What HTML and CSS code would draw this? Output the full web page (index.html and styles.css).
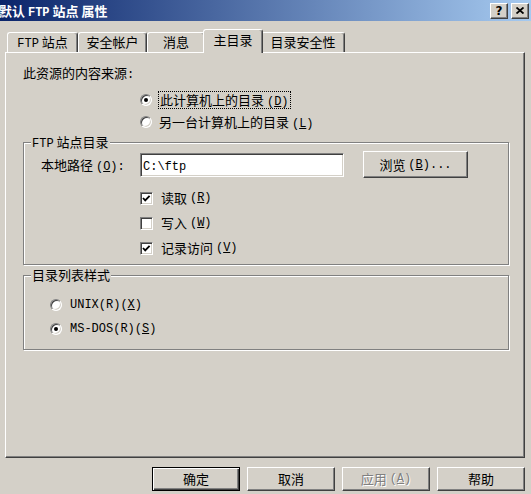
FILE: index.html
```html
<!DOCTYPE html>
<html lang="zh-CN">
<head>
<meta charset="UTF-8">
<link rel="stylesheet" href="styles.css">
<title>默认 FTP 站点 属性</title>
</head>
<body>
<div class="titlebar">
  <div class="title">默认 <span class="en">FTP</span> 站点 属性</div>
  <div class="caption-btn">?</div>
  <div class="caption-btn">
    <svg width="8" height="7" viewBox="0 0 8 7"><path d="M0.5 0.5 L7.5 6.5 M7.5 0.5 L0.5 6.5" stroke="#000" stroke-width="1.8"/></svg>
  </div>
</div>

<div class="tabs">
  <div class="tab" style="width:71px"><span class="en">FTP</span> 站点</div>
  <div class="tab" style="width:69px">安全帐户</div>
  <div class="tab" style="width:58px">消息</div>
  <div class="tab active" style="width:60px">主目录</div>
  <div class="tab" style="width:84px">目录安全性</div>
</div>

<div class="panel">
  <div class="source-label">此资源的内容来源<span class="en">:</span></div>
  <div class="source-options">
    <div class="option"><span class="radio on"></span><span class="focus">此计算机上的目录 <span class="en">(<u>D</u>)</span></span></div>
    <div class="option"><span class="radio"></span><span>另一台计算机上的目录 <span class="en">(<u>L</u>)</span></span></div>
  </div>

  <div class="group">
    <div class="group-title"><span class="en">FTP</span> 站点目录</div>
    <div class="path-row">
      <span class="path-label">本地路径 <span class="en">(<u>O</u>):</span></span>
      <div class="textbox"><span class="en">C:\ftp</span></div>
      <button class="btn browse">浏览 <span class="en">(<u>B</u>)...</span></button>
    </div>
    <div class="checks">
      <div class="option"><span class="check on"><svg width="9" height="9" viewBox="0 0 9 9"><path d="M1 4 L3.2 6.4 L7.6 1.8" fill="none" stroke="#000" stroke-width="1.8"/></svg></span>读取 <span class="en">(<u>R</u>)</span></div>
      <div class="option"><span class="check"></span>写入 <span class="en">(<u>W</u>)</span></div>
      <div class="option"><span class="check on"><svg width="9" height="9" viewBox="0 0 9 9"><path d="M1 4 L3.2 6.4 L7.6 1.8" fill="none" stroke="#000" stroke-width="1.8"/></svg></span>记录访问 <span class="en">(<u>V</u>)</span></div>
    </div>
  </div>

  <div class="group list-style">
    <div class="group-title">目录列表样式</div>
    <div class="list-options">
      <div class="option"><span class="radio"></span><span class="en">UNIX(R)(<u>X</u>)</span></div>
      <div class="option"><span class="radio on"></span><span class="en">MS-DOS(R)(<u>S</u>)</span></div>
    </div>
  </div>
</div>

<div class="buttons">
  <button class="btn default">确定</button>
  <button class="btn">取消</button>
  <button class="btn disabled">应用 <span class="en">(<u>A</u>)</span></button>
  <button class="btn">帮助</button>
</div>
</body>
</html>
```
FILE: styles.css
```css
body {
  margin: 0;
  width: 531px;
  height: 494px;
  overflow: hidden;
  background: #d4d0c8;
  color: #000;
  font: 13px/16px "Noto Sans CJK SC", sans-serif;
}

/* latin runs use a narrow mono face, like the dialog's bitmap font */
.en {
  font-family: "Liberation Mono", monospace;
  font-size: 12px;
  line-height: 1;
}

/* title bar */
.titlebar {
  height: 21px;
  display: flex;
  align-items: center;
  padding-right: 2px;
  background: linear-gradient(to right, #0a246a, #a6caf0);
}

.title {
  flex: 1;
  margin-left: -1px;
  color: #fff;
  font-weight: bold;
}

.caption-btn {
  width: 18px;
  height: 16px;
  box-sizing: border-box;
  margin-left: 3px;
  display: flex;
  align-items: center;
  justify-content: center;
  background: #d4d0c8;
  border: 1px solid;
  border-color: #fff #404040 #404040 #fff;
  box-shadow: inset -1px -1px #808080;
  font: bold 12px/12px "DejaVu Sans", sans-serif;
}

/* tabs */
.tabs {
  display: flex;
  align-items: flex-end;
  height: 23px;
  margin-top: 8px;
  padding-left: 7px;
}

.tab {
  height: 20px;
  box-sizing: border-box;
  border: 1px solid;
  border-bottom: 0;
  border-color: #fff #404040 transparent #fff;
  border-radius: 3px 3px 0 0;
  box-shadow: inset -1px 0 #808080;
  text-align: center;
  line-height: 18px;
  white-space: nowrap;
}

.tab.active {
  height: 24px;
  margin: 0 -2px -1px;
  position: relative;
  z-index: 1;
  background: #d4d0c8;
  line-height: 20px;
}

.panel {
  height: 406px;
  box-sizing: border-box;
  margin: 0 6px 0 5px;
  padding: 12px 15px 0 17px;
  border: 1px solid;
  border-color: #fff #404040 #404040 #fff;
  box-shadow: inset -1px -1px #808080;
}

.source-label {
  height: 16px;
}

.source-options {
  margin: 11px 0 0 117px;
  display: flex;
  flex-direction: column;
  gap: 6px;
}

.option {
  display: flex;
  align-items: center;
  height: 16px;
  white-space: pre;
}

.radio {
  flex: none;
  width: 12px;
  height: 12px;
  box-sizing: border-box;
  margin-right: 7px;
  display: flex;
  align-items: center;
  justify-content: center;
  border-radius: 50%;
  background: #fff;
  border: 1px solid;
  border-color: #808080 #fff #fff #808080;
  box-shadow: inset 1px 1px #404040, inset -1px -1px #d4d0c8;
}

.radio.on::after {
  content: "";
  width: 4px;
  height: 4px;
  border-radius: 50%;
  background: #000;
}

.focus {
  padding: 0 1px;
  outline: 1px dotted #000;
}

/* group boxes */
.group {
  margin-top: 12px;
  padding-bottom: 8px;
  border: 1px solid #808080;
  box-shadow: 1px 1px #fff, inset 1px 1px #fff;
}

.group-title {
  width: fit-content;
  height: 16px;
  margin: -9px 0 0 7px;
  padding: 0 1px;
  background: #d4d0c8;
}

.path-row {
  display: flex;
  align-items: center;
  height: 27px;
  margin-top: 1px;
  padding-left: 17px;
}

.path-label {
  width: 99px;
}

.textbox {
  width: 204px;
  height: 24px;
  box-sizing: border-box;
  padding-left: 2px;
  line-height: 21px;
  background: #fff;
  border: 1px solid;
  border-color: #808080 #fff #fff #808080;
  box-shadow: inset 1px 1px #404040, inset -1px -1px #d4d0c8;
}

.checks {
  margin: 12px 0 0 116px;
  display: flex;
  flex-direction: column;
  gap: 9px;
}

.check {
  flex: none;
  width: 13px;
  height: 13px;
  box-sizing: border-box;
  margin-right: 8px;
  display: flex;
  align-items: center;
  justify-content: center;
  background: #fff;
  border: 1px solid;
  border-color: #808080 #fff #fff #808080;
  box-shadow: inset 1px 1px #404040, inset -1px -1px #d4d0c8;
}

.list-style {
  margin-top: 10px;
  padding-bottom: 12px;
}

.list-options {
  margin-top: 14px;
  padding-left: 26px;
  display: flex;
  flex-direction: column;
  gap: 8px;
}

.list-options .radio {
  margin-right: 8px;
}

/* buttons */
.btn {
  width: 88px;
  height: 24px;
  box-sizing: border-box;
  padding: 0;
  display: flex;
  align-items: center;
  justify-content: center;
  white-space: pre;
  background: #d4d0c8;
  color: #000;
  font: inherit;
  border: 1px solid;
  border-color: #fff #404040 #404040 #fff;
  box-shadow: inset -1px -1px #808080;
}

.browse {
  width: 105px;
  height: 27px;
  margin-left: 19px;
}

.buttons {
  display: flex;
  justify-content: flex-end;
  gap: 7px;
  margin-top: 9px;
  padding-right: 6px;
}

.btn.default {
  border-color: #000;
  box-shadow: inset 1px 1px #fff, inset -1px -1px #404040, inset -2px -2px #808080;
}

.btn.disabled {
  color: #808080;
  text-shadow: 1px 1px #fff;
}
```
